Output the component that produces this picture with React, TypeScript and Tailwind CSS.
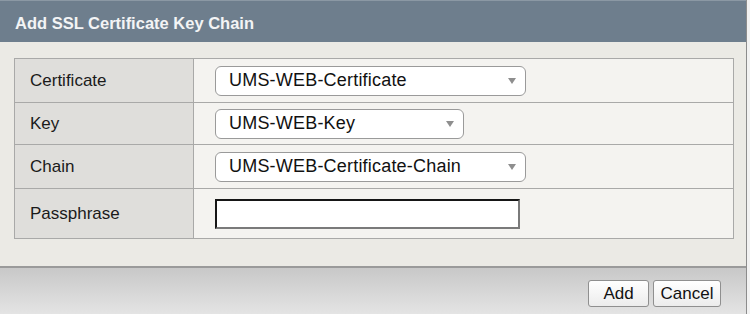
import React from "react";

const rows = [
  { label: "Certificate", value: "UMS-WEB-Certificate", width: "w-[311px]", h: "h-[44px]" },
  { label: "Key", value: "UMS-WEB-Key", width: "w-[249px]", h: "h-[42px]" },
  { label: "Chain", value: "UMS-WEB-Certificate-Chain", width: "w-[311px]", h: "h-[44px]" },
];

function Select({ value, width }: { value: string; width: string }) {
  return (
    <div
      className={`${width} h-[30px] flex items-center justify-between rounded-[6px] border border-[#9a9a9a] bg-white pl-[13px] pr-[9px] text-[18px] text-[#111]`}
    >
      <span className="tracking-[0.2px]">{value}</span>
      <svg width="8" height="6" viewBox="0 0 8 6">
        <path d="M0 0h8L4 6z" fill="#8e8e8e" />
      </svg>
    </div>
  );
}

export default function App() {
  return (
    <div
      className="w-[750px] h-[314px] flex bg-[#f2f2f2] overflow-hidden"
      style={{ fontFamily: '"Liberation Sans", Arial, sans-serif' }}
    >
      <div className="w-[747px] flex flex-col border-r border-[#8c8c8c]">
        <div className="h-[42px] shrink-0 flex items-center bg-[#6e7e8d] border-t border-[#8b98a4] pl-[15px] pt-[3px] text-[16.5px] font-bold text-[#f3f4f5]">
          Add SSL Certificate Key Chain
        </div>
        <div className="flex-1 bg-[#ebeae5] pt-[16px] pl-[14px] pr-[12px]">
          <div className="border border-[#a9a9a8]">
            {rows.map((r) => (
              <div key={r.label} className={`grid grid-cols-[179px_1fr] ${r.h} border-b border-[#a9a9a8]`}>
                <div className="flex items-center bg-[#dfdedb] border-r border-[#a9a9a8] pl-[15px] text-[17px] text-[#1a1a1a]">
                  {r.label}
                </div>
                <div className="flex items-center bg-[#f4f3f0] pl-[21px]">
                  <Select value={r.value} width={r.width} />
                </div>
              </div>
            ))}
            <div className="grid grid-cols-[179px_1fr] h-[49px]">
              <div className="flex items-center bg-[#dfdedb] border-r border-[#a9a9a8] pl-[15px] text-[17px] text-[#1a1a1a]">
                Passphrase
              </div>
              <div className="flex items-center bg-[#f4f3f0] pl-[21px]">
                <div className="w-[305px] h-[30px] bg-white border-2 border-[#161616] border-r-[#7a7a7a] border-b-[#7a7a7a]" />
              </div>
            </div>
          </div>
        </div>
        <div className="h-[48px] shrink-0 flex justify-end gap-[4px] pt-[12px] pr-[25px] border-t-2 border-[#9a9a9a] bg-gradient-to-b from-[#c8c8c8] to-[#e4e4e4]">
          <button className="w-[61px] h-[27px] rounded-[3px] border border-[#8f8f8f] bg-gradient-to-b from-white to-[#ececec] text-[17px] text-[#111]">
            Add
          </button>
          <button className="w-[68px] h-[27px] rounded-[3px] border border-[#8f8f8f] bg-gradient-to-b from-white to-[#ececec] text-[17px] text-[#111]">
            Cancel
          </button>
        </div>
      </div>
    </div>
  );
}
